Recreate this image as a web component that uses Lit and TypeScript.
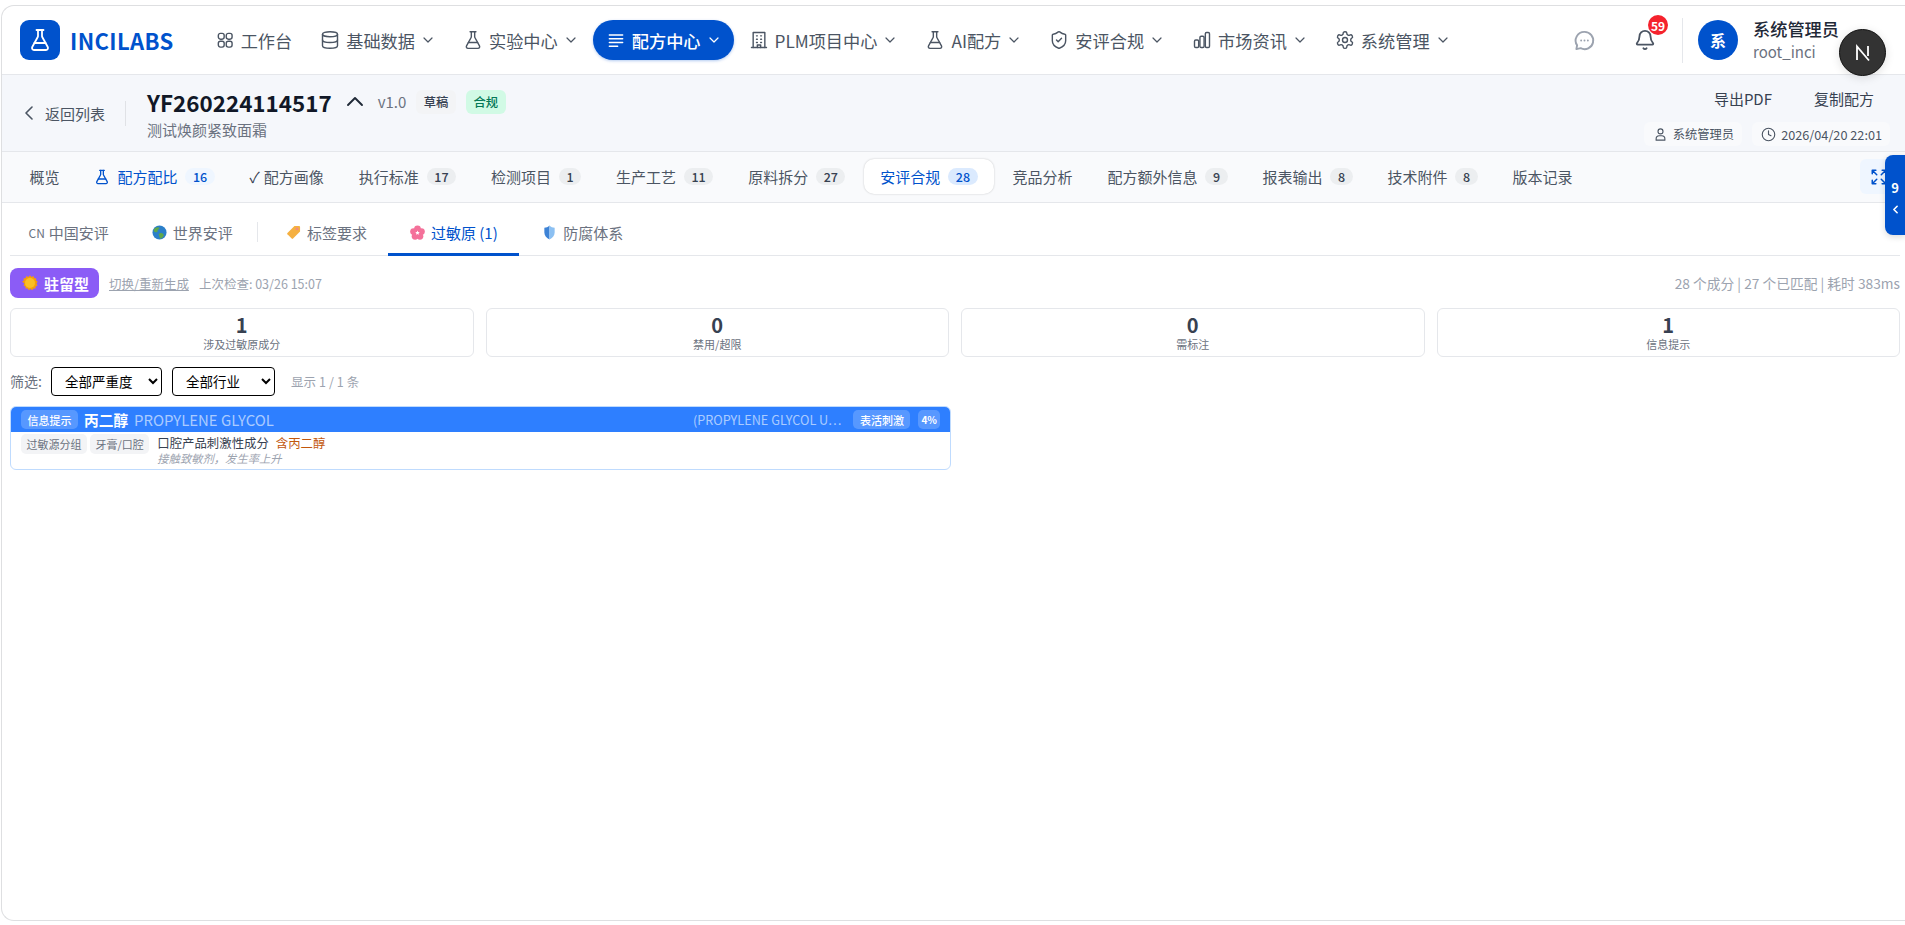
import { LitElement, html, css, svg } from "lit";
import { customElement } from "lit/decorators.js";

const ic = (body: unknown, cls = "ic") => html`<svg class=${cls} viewBox="0 0 24 24" fill="none" stroke="currentColor" stroke-width="2" stroke-linecap="round" stroke-linejoin="round">${body}</svg>`;

const flask = svg`<path d="M14 2v6a2 2 0 0 0 .245.96l5.51 10.08A2 2 0 0 1 18 22H6a2 2 0 0 1-1.755-2.96l5.51-10.08A2 2 0 0 0 10 8V2"/><path d="M6.453 15h11.094"/><path d="M8.5 2h7"/>`;
const grid = svg`<rect x="4" y="4" width="7" height="7" rx="2.5"/><rect x="13.5" y="4" width="7" height="7" rx="2.5"/><rect x="4" y="13.5" width="7" height="7" rx="2.5"/><rect x="13.5" y="13.5" width="7" height="7" rx="2.5"/>`;
const database = svg`<ellipse cx="12" cy="5" rx="9" ry="3"/><path d="M3 5v14a9 3 0 0 0 18 0V5"/><path d="M3 12a9 3 0 0 0 18 0"/>`;
const lines = svg`<path d="M4 6h16"/><path d="M4 10.5h16"/><path d="M4 15h16"/><path d="M4 19.5h10"/>`;
const building = svg`<path d="M5 21V3h14v18"/><path d="M3 21h18"/><path d="M9 7h1M14 7h1M9 11h1M14 11h1M9 15h1M14 15h1"/><path d="M10 21v-3h4v3"/>`;
const shield = svg`<path d="M20 13c0 5-3.5 7.5-7.66 8.95a1 1 0 0 1-.67-.01C7.5 20.5 4 18 4 13V6a1 1 0 0 1 1-1c2 0 4.5-1.2 6.24-2.72a1.17 1.17 0 0 1 1.52 0C14.51 3.81 17 5 19 5a1 1 0 0 1 1 1z"/><path d="m9 12 2 2 4-4"/>`;
const bars = svg`<rect x="3" y="12" width="5" height="9" rx="1.5"/><rect x="9.5" y="7.5" width="5" height="13.5" rx="1.5"/><rect x="16" y="3" width="5" height="18" rx="1.5"/>`;
const gear = svg`<path d="M12.22 2h-.44a2 2 0 0 0-2 2v.18a2 2 0 0 1-1 1.73l-.43.25a2 2 0 0 1-2 0l-.15-.08a2 2 0 0 0-2.73.73l-.22.38a2 2 0 0 0 .73 2.73l.15.1a2 2 0 0 1 1 1.72v.51a2 2 0 0 1-1 1.74l-.15.09a2 2 0 0 0-.73 2.73l.22.38a2 2 0 0 0 2.73.73l.15-.08a2 2 0 0 1 2 0l.43.25a2 2 0 0 1 1 1.73V20a2 2 0 0 0 2 2h.44a2 2 0 0 0 2-2v-.18a2 2 0 0 1 1-1.73l.43-.25a2 2 0 0 1 2 0l.15.08a2 2 0 0 0 2.73-.73l.22-.39a2 2 0 0 0-.73-2.73l-.15-.08a2 2 0 0 1-1-1.74v-.5a2 2 0 0 1 1-1.74l.15-.09a2 2 0 0 0 .73-2.73l-.22-.38a2 2 0 0 0-2.73-.73l-.15.08a2 2 0 0 1-2 0l-.43-.25a2 2 0 0 1-1-1.73V4a2 2 0 0 0-2-2z"/><circle cx="12" cy="12" r="3"/>`;
const down = html`<svg class="down" viewBox="0 0 10 6" fill="none" stroke="currentColor" stroke-width="1.2" stroke-linecap="round" stroke-linejoin="round"><path d="M1 1l4 4 4-4" /></svg>`;

const navItems = [
  { label: "工作台", icon: grid, arrow: false },
  { label: "基础数据", icon: database, arrow: true },
  { label: "实验中心", icon: flask, arrow: true },
  { label: "配方中心", icon: lines, arrow: true, active: true },
  { label: "PLM项目中心", icon: building, arrow: true },
  { label: "AI配方", icon: flask, arrow: true },
  { label: "安评合规", icon: shield, arrow: true },
  { label: "市场资讯", icon: bars, arrow: true },
  { label: "系统管理", icon: gear, arrow: true },
];

const tabs: { label: string; count?: number; flask?: boolean; check?: boolean; blue?: boolean; active?: boolean }[] = [
  { label: "概览" },
  { label: "配方配比", count: 16, flask: true, blue: true },
  { label: "配方画像", check: true },
  { label: "执行标准", count: 17 },
  { label: "检测项目", count: 1 },
  { label: "生产工艺", count: 11 },
  { label: "原料拆分", count: 27 },
  { label: "安评合规", count: 28, active: true },
  { label: "竞品分析" },
  { label: "配方额外信息", count: 9 },
  { label: "报表输出", count: 8 },
  { label: "技术附件", count: 8 },
  { label: "版本记录" },
];

const stats = [
  { value: 1, label: "涉及过敏原成分" },
  { value: 0, label: "禁用/超限" },
  { value: 0, label: "需标注" },
  { value: 1, label: "信息提示" },
];

const globe = html`<svg class="emoji" viewBox="0 0 16 16"><circle cx="8" cy="8" r="7.5" fill="#2b7fc9"/><path d="M3 3.5c2-1.5 4-1.5 5-.5 0 1.500-2 1.500-2 3s-1.500 2-3 1.500-1.500-2.500 0-4zM8 9c2-1 4 0 4.500 1.500S11 14 9.500 14.500 8 12 7.500 11 7 9.500 8 9z" fill="#5fa84a"/></svg>`;
const tag = html`<svg class="emoji" viewBox="0 0 16 16"><path d="M9 1h5a1 1 0 0 1 1 1v5L7.500 14.500a1 1 0 0 1-1.400 0L1.500 9.900a1 1 0 0 1 0-1.400z" fill="#f5b041"/><circle cx="11.800" cy="4.200" r="1.500" fill="#f28b82"/></svg>`;
const flower = html`<svg class="emoji" viewBox="0 0 16 16"><g fill="#f4719a"><circle cx="8" cy="4" r="3.600"/><circle cx="12.200" cy="7" r="3.600"/><circle cx="10.600" cy="12" r="3.600"/><circle cx="5.400" cy="12" r="3.600"/><circle cx="3.800" cy="7" r="3.600"/></g><path d="m8 5.800.7 1.600 1.700.2-1.300 1.100.4 1.700L8 9.500l-1.500.9.400-1.700-1.300-1.100 1.700-.2z" fill="#fff"/></svg>`;
const shieldEmoji = html`<svg class="emoji" viewBox="0 0 16 16"><path d="M8 .5C6.500 2 4.500 2.800 2.500 3v5c0 3.500 2.500 6 5.500 7.500z" fill="#3d83d6"/><path d="M8 .5C9.500 2 11.500 2.800 13.500 3v5c0 3.500-2.500 6-5.500 7.500z" fill="#8cc0f2"/></svg>`;
const sun = html`<svg class="emoji sun" viewBox="0 0 16 16"><path d="M8 .3l1.500 1.600 2-.8.700 2 2.100.3-.3 2.100 1.700 1.200-1.200 1.800 1 1.900-1.900 1-.100 2.100-2.100-.1-1.100 1.800-1.800-1.100-1.800 1.100-1.100-1.800-2.100.1-.1-2.100-1.900-1 1-1.900L.1 6.700l1.700-1.200-.3-2.100 2.100-.3.700-2 2 .8z" fill="#f59e0b"/><circle cx="8" cy="8" r="5" fill="#fbbf24"/></svg>`;

@customElement("app-root")
export class AppRoot extends LitElement {
  static styles = css`
    :host {
      display: block;
      height: 925px;
      overflow: hidden;
      padding-top: 5px;
      box-sizing: border-box;
      background: #fff;
      font-family: "Noto Sans CJK SC", "Noto Sans", sans-serif;
      color: #374151;
      position: relative;
    }
    .frame {
      height: 916px;
      margin-left: 1px;
      box-sizing: border-box;
      border: 1px solid #dedfe1;
      border-right: none;
      border-radius: 13px 0 0 13px;
      overflow: hidden;
      background: #fff;
    }
    .ic { width: 16px; height: 16px; flex: none; }
    .emoji { width: 15px; height: 15px; flex: none; }
    .emoji.sun { width: 16px; height: 16px; }

    header {
      height: 69px;
      box-sizing: border-box;
      border-bottom: 1px solid #e5e7eb;
      display: flex;
      align-items: center;
      padding: 0 66px 0 18px;
    }
    .logo {
      width: 40px;
      height: 40px;
      border-radius: 9px;
      background: #0052cc;
      color: #fff;
      display: flex;
      align-items: center;
      justify-content: center;
    }
    .logo .ic { width: 24px; height: 24px; stroke-width: 1.8; }
    .brand {
      margin: 0 28px 0 10px;
      font-size: 22px;
      font-weight: 700;
      color: #0052cc;
      letter-spacing: 0.4px;
    }
    nav { display: flex; gap: 2px; }
    .nav-item {
      height: 40px;
      padding: 0 15px 0 13px;
      border-radius: 20px;
      display: flex;
      align-items: center;
      gap: 6px;
      font-size: 17.200px;
      color: #4b5563;
      white-space: nowrap;
    }
    .nav-item:first-child { padding-right: 13px; }
    .nav-item.active {
      background: #0052cc;
      color: #fff;
      font-weight: 500;
      box-shadow: 0 1px 3px rgba(0, 82, 204, 0.3);
    }
    .nav-item .ic { stroke-width: 1.7; width: 20px; height: 20px; }
    .down { width: 10px; height: 6px; margin-left: 2px; flex: none; }
    .tools { margin-left: auto; display: flex; align-items: center; }
    .chat { color: #9ca3af; width: 23px; height: 23px; margin-right: 38px; }
    .bell { position: relative; width: 20px; height: 22px; color: #4b5563; margin-right: 28px; }
    .bell .ic { width: 22px; height: 22px; }
    .bell-badge {
      position: absolute;
      top: -14px;
      left: 14px;
      width: 20px;
      height: 20px;
      border-radius: 50%;
      background: #f5222d;
      color: #fff;
      font-size: 12px;
      font-weight: 700;
      display: flex;
      align-items: center;
      justify-content: center;
    }
    .user {
      display: flex;
      align-items: center;
      gap: 15px;
      border-left: 1px solid #e5e7eb;
      height: 45px;
      padding-left: 15px;
    }
    .avatar {
      width: 40px;
      height: 40px;
      border-radius: 50%;
      background: #0052cc;
      color: #fff;
      font-size: 16px;
      font-weight: 700;
      display: flex;
      align-items: center;
      justify-content: center;
    }
    .user-name { font-size: 17.200px; line-height: 24px; color: #1f2937; font-weight: 500; }
    .user-id { font-size: 15px; line-height: 22px; color: #6b7280; }

    .sub {
      height: 77px;
      box-sizing: border-box;
      background: #f5f7fb;
      border-bottom: 1px solid #e5e7eb;
      display: flex;
      align-items: center;
      padding: 3px 15px 0 22px;
    }
    .back {
      display: flex;
      align-items: center;
      gap: 11px;
      font-size: 15px;
      color: #4b5563;
      height: 25px;
      padding-right: 20px;
      border-right: 1px solid #e0e2e6;
      margin: -3px 21px 0 0;
    }
    .back svg { width: 10px; height: 14px; flex: none; }
    .title-row { display: flex; align-items: center; height: 24px; }
    .code { font-size: 22.400px; font-weight: 700; color: #111827; }
    .caret { width: 24px; height: 24px; margin: 0 11px; color: #1f2937; flex: none; }
    .ver { font-size: 15px; color: #6b7280; margin-right: 10px; }
    .status {
      height: 24px;
      padding: 0 7.500px;
      border-radius: 6px;
      font-size: 12.300px;
      display: flex;
      align-items: center;
      font-weight: 500;
      background: #f3f4f6;
      color: #374151;
      margin-right: 10px;
    }
    .status.ok { background: #d1fae5; color: #047857; }
    .caption { font-size: 15px; line-height: 20px; margin-top: 6px; color: #6b7280; }
    .sub-right { margin-left: auto; display: flex; flex-direction: column; align-items: flex-end; gap: 7px; }
    .actions { display: flex; gap: 10px; }
    .action { font-size: 15px; height: 32px; line-height: 32px; padding: 0 16px; color: #374151; }
    .chips { display: flex; gap: 10px; }
    .chip {
      height: 24px;
      padding: 0 8px 0 9px;
      border-radius: 6px;
      background: #f9fafc;
      display: flex;
      align-items: center;
      gap: 5px;
      font-size: 12.300px;
      color: #4b5563;
    }
    .chip.date { font-size: 12.700px; }
    .chip .ic { width: 15px; height: 15px; stroke-width: 1.8; }

    .tabs {
      height: 51px;
      box-sizing: border-box;
      background: #f9fafc;
      border-bottom: 1px solid #e5e7eb;
      display: flex;
      align-items: center;
      gap: 2.900px;
      padding: 0 10px 1px 11.500px;
    }
    .tab {
      height: 35px;
      padding: 0 16px;
      border-radius: 10px;
      display: flex;
      align-items: center;
      gap: 8px;
      font-size: 15px;
      color: #4b5563;
      white-space: nowrap;
      box-sizing: border-box;
    }
    .tab .ic { width: 16px; height: 16px; margin-right: -1px; }
    .tab.blue { color: #0052cc; }
    .tab.active { background: #fff; color: #0052cc; box-shadow: 0 0 2px rgba(0, 0, 0, 0.22); }
    .check { margin-right: -4px; color: #374151; font-size: 15px; }
    .count {
      min-width: 22px;
      height: 17px;
      box-sizing: border-box;
      padding: 0 7.500px;
      border-radius: 9px;
      background: #eceef0;
      color: #374151;
      font-size: 12.500px;
      font-weight: 500;
      line-height: 17px;
      text-align: center;
    }
    .tab.blue .count { background: #eff6ff; color: #0052cc; }
    .tab.active .count { background: #dbeafe; color: #0052cc; }
    .expand {
      margin-left: auto;
      width: 35px;
      height: 35px;
      border-radius: 6px;
      background: #eff6ff;
      color: #0052cc;
      display: flex;
      align-items: center;
      padding-left: 10px;
      box-sizing: border-box;
    }
    .expand .ic { width: 18px; height: 18px; }

    .content { padding: 0 5px 0 8px; }
    .subtabs {
      height: 53px;
      box-sizing: border-box;
      border-bottom: 1px solid #e5e7eb;
      display: flex;
      align-items: stretch;
    }
    .subtab {
      display: flex;
      align-items: center;
      gap: 6px;
      padding: 8px 21.500px 0;
      font-size: 15px;
      color: #6b7280;
      margin-bottom: -1px;
      border-bottom: 3px solid transparent;
      box-sizing: border-box;
    }
    .subtab:first-child { padding-left: 18.500px; gap: 4px; }
    .subtab:last-child { margin-left: 1.500px; }
    .subtab.active { color: #0052cc; border-bottom-color: #0052cc; }
    .cn { font-size: 12px; }
    .sep { width: 1px; height: 20px; background: #e5e7eb; align-self: center; margin: 6px 6px 0 3px; }

    .meta { display: flex; align-items: center; margin-top: 12px; height: 30px; }
    .type {
      height: 30px;
      width: 89px;
      border-radius: 8px;
      background: #8b5cf6;
      color: #fff;
      font-size: 15px;
      font-weight: 700;
      display: flex;
      align-items: center;
      gap: 6px;
      padding-left: 12px;
      margin-right: 10px;
      box-sizing: border-box;
    }
    .switch { font-size: 12.500px; color: #9ca3af; text-decoration: underline; margin-right: 10px; }
    .checked { font-size: 12.500px; color: #9ca3af; }
    .summary { margin-left: auto; font-size: 13.750px; color: #9ca3af; }

    .stats { display: grid; grid-template-columns: repeat(4, 1fr); gap: 12px; margin-top: 10px; }
    .stat {
      height: 49px;
      box-sizing: border-box;
      border: 1px solid #e5e7eb;
      border-radius: 6px;
      display: flex;
      flex-direction: column;
      align-items: center;
      justify-content: center;
    }
    .stat b { font-size: 20px; line-height: 24px; color: #374151; }
    .stat span { font-size: 11px; line-height: 15px; color: #6b7280; }

    .filters { display: flex; align-items: center; margin-top: 9px; height: 30px; }
    .filters label { font-size: 14px; color: #6b7280; margin-right: 9px; }
    select {
      font-family: inherit;
      font-size: 13.500px;
      height: 29px;
      padding: 0 9px;
      border: 1px solid #000;
      border-radius: 4px;
      background: #fff;
      color: #000;
      margin-right: 10px;
    }
    .sev { width: 111px; }
    .ind { width: 103px; }
    .shown { font-size: 12.500px; color: #9ca3af; margin-left: 6px; letter-spacing: 0.1px; }

    .card {
      width: 941px;
      height: 64px;
      box-sizing: border-box;
      margin-top: 10px;
      border: 1px solid #bfdbfe;
      border-radius: 6px;
      overflow: hidden;
    }
    .card-head {
      height: 25px;
      background: #2e7fff;
      display: flex;
      align-items: center;
      padding: 0 10px;
      color: #fff;
    }
    .tagw {
      height: 19px;
      padding: 0 6.500px;
      border-radius: 5px;
      background: rgba(255, 255, 255, 0.2);
      font-size: 11px;
      font-weight: 500;
      display: flex;
      align-items: center;
    }
    .cname { font-size: 14.700px; font-weight: 700; margin-left: 6px; }
    .ename { font-size: 14.900px; color: rgba(255, 255, 255, 0.6); margin-left: 6px; }
    .inci {
      margin-left: auto;
      font-size: 12.700px;
      color: rgba(255, 255, 255, 0.6);
      white-space: nowrap;
    }
    .head-tags { display: flex; gap: 8px; margin-left: 12px; }
    .tagw.pct { font-size: 10px; font-weight: 700; padding: 0 3px; }
    .card-body { display: flex; padding: 2px 10px; }
    .gray {
      height: 20px;
      padding: 0 5.500px;
      margin-right: 3px;
      border-radius: 5px;
      background: #f3f4f6;
      color: #6b7280;
      font-size: 11px;
      display: flex;
      align-items: center;
    }
    .desc { margin-left: 5px; }
    .desc-top { font-size: 12.400px; line-height: 18px; color: #374151; }
    .desc-top em { font-style: normal; color: #c2570c; margin-left: 7px; }
    .desc-note { font-size: 11.300px; line-height: 13px; font-style: italic; color: #9ca3af; }

    .next {
      position: absolute;
      left: 1839px;
      top: 29px;
      width: 47px;
      height: 47px;
      box-sizing: border-box;
      border-radius: 50%;
      background: #333;
      border: 1.500px solid #111;
      box-shadow: 0 2px 10px rgba(0, 0, 0, 0.12);
      display: flex;
      align-items: center;
      justify-content: center;
      color: #fff;
    }
    .next svg { width: 20px; height: 20px; }
    .drawer {
      position: absolute;
      left: 1885px;
      top: 155px;
      width: 20px;
      height: 80px;
      border-radius: 8px 0 0 8px;
      background: #0052cc;
      color: #fff;
      box-shadow: 0 2px 6px rgba(0, 0, 0, 0.15);
      display: flex;
      flex-direction: column;
      align-items: center;
      padding-top: 24px;
      box-sizing: border-box;
      font-size: 13px;
      font-weight: 700;
      line-height: 18px;
    }
    .drawer .ic { width: 13px; height: 13px; stroke-width: 3; margin-top: 6px; }
  `;

  render() {
    return html`
      <div class="frame">
        <header>
          <div class="logo">${ic(flask)}</div>
          <div class="brand">INCILABS</div>
          <nav>
            ${navItems.map(
              (n) => html`<div class="nav-item ${n.active ? "active" : ""}">
                ${ic(n.icon)}<span>${n.label}</span>${n.arrow ? down : ""}
              </div>`
            )}
          </nav>
          <div class="tools">
            <svg class="chat" viewBox="0 0 24 24" fill="none" stroke="currentColor" stroke-width="2" stroke-linecap="round" stroke-linejoin="round">
              <path d="M12 3a9 9 0 1 1-4 17l-4.500 1 .8-4A9 9 0 0 1 12 3z" />
              <path d="M8.500 12h.01M12 12h.01M15.500 12h.01" />
            </svg>
            <div class="bell">
              ${ic(svg`<path d="M10.268 21a2 2 0 0 0 3.464 0"/><path d="M3.262 15.326A1 1 0 0 0 4 17h16a1 1 0 0 0 .74-1.673C19.410 13.956 18 12.499 18 8A6 6 0 0 0 6 8c0 4.499-1.411 5.956-2.738 7.326"/>`)}
              <span class="bell-badge">59</span>
            </div>
            <div class="user">
              <div class="avatar">系</div>
              <div>
                <div class="user-name">系统管理员</div>
                <div class="user-id">root_inci</div>
              </div>
            </div>
          </div>
        </header>

        <section class="sub">
          <div class="back">
            <svg viewBox="0 0 10 14" fill="none" stroke="currentColor" stroke-width="1.600" stroke-linecap="round" stroke-linejoin="round"><path d="M8 1 2 7l6 6" /></svg>
            <span>返回列表</span>
          </div>
          <div>
            <div class="title-row">
              <span class="code">YF260224114517</span>
              <svg class="caret" viewBox="0 0 24 24" fill="none" stroke="currentColor" stroke-width="1.900" stroke-linecap="round" stroke-linejoin="round"><path d="m5 15 7-7 7 7" /></svg>
              <span class="ver">v1.0</span>
              <span class="status">草稿</span>
              <span class="status ok">合规</span>
            </div>
            <div class="caption">测试焕颜紧致面霜</div>
          </div>
          <div class="sub-right">
            <div class="actions">
              <span class="action">导出PDF</span>
              <span class="action">复制配方</span>
            </div>
            <div class="chips">
              <span class="chip">${ic(svg`<circle cx="12" cy="7" r="4"/><path d="M5 21v-2a5 5 0 0 1 5-5h4a5 5 0 0 1 5 5v2z"/>`)}系统管理员</span>
              <span class="chip date">${ic(svg`<circle cx="12" cy="12" r="10"/><path d="M12 6v6l4 2"/>`)}2026/04/20 22:01</span>
            </div>
          </div>
        </section>

        <section class="tabs">
          ${tabs.map(
            (t) => html`<div class="tab ${t.blue ? "blue" : ""} ${t.active ? "active" : ""}">
              ${t.flask ? ic(flask) : ""}${t.check ? html`<span class="check">✓</span>` : ""}
              <span>${t.label}</span>
              ${t.count !== undefined ? html`<span class="count">${t.count}</span>` : ""}
            </div>`
          )}
          <div class="expand">${ic(svg`<path d="m21 21-6-6m6 6v-4.800m0 4.800h-4.800"/><path d="M3 16.200V21m0 0h4.800M3 21l6-6"/><path d="M21 7.800V3m0 0h-4.800M21 3l-6 6"/><path d="M3 7.800V3m0 0h4.800M3 3l6 6"/>`)}</div>
        </section>

        <main class="content">
          <div class="subtabs">
            <div class="subtab"><span class="cn">CN</span>中国安评</div>
            <div class="subtab">${globe}世界安评</div>
            <div class="sep"></div>
            <div class="subtab">${tag}标签要求</div>
            <div class="subtab active">${flower}过敏原 (1)</div>
            <div class="subtab">${shieldEmoji}防腐体系</div>
          </div>

          <div class="meta">
            <div class="type">${sun}驻留型</div>
            <span class="switch">切换/重新生成</span>
            <span class="checked">上次检查: 03/26 15:07</span>
            <span class="summary">28 个成分 | 27 个已匹配 | 耗时 383ms</span>
          </div>

          <div class="stats">
            ${stats.map((s) => html`<div class="stat"><b>${s.value}</b><span>${s.label}</span></div>`)}
          </div>

          <div class="filters">
            <label>筛选:</label>
            <select class="sev"><option>全部严重度</option></select>
            <select class="ind"><option>全部行业</option></select>
            <span class="shown">显示 1 / 1 条</span>
          </div>

          <div class="card">
            <div class="card-head">
              <span class="tagw">信息提示</span>
              <span class="cname">丙二醇</span>
              <span class="ename">PROPYLENE GLYCOL</span>
              <span class="inci">(PROPYLENE GLYCOL U⋯</span>
              <div class="head-tags">
                <span class="tagw">表活刺激</span>
                <span class="tagw pct">4%</span>
              </div>
            </div>
            <div class="card-body">
              <span class="gray">过敏源分组</span>
              <span class="gray">牙膏/口腔</span>
              <div class="desc">
                <div class="desc-top">口腔产品刺激性成分<em>含丙二醇</em></div>
                <div class="desc-note">接触致敏剂，发生率上升</div>
              </div>
            </div>
          </div>
        </main>
      </div>

      <div class="next">
        <svg viewBox="0 0 20 20" fill="none" stroke="currentColor" stroke-width="1.800"><path d="M4 17V3.500L16 17.500" /><path d="M15 3v10" /></svg>
      </div>
      <div class="drawer">
        <span>9</span>
        ${ic(svg`<path d="m15 18-6-6 6-6"/>`)}
      </div>
    `;
  }
}
